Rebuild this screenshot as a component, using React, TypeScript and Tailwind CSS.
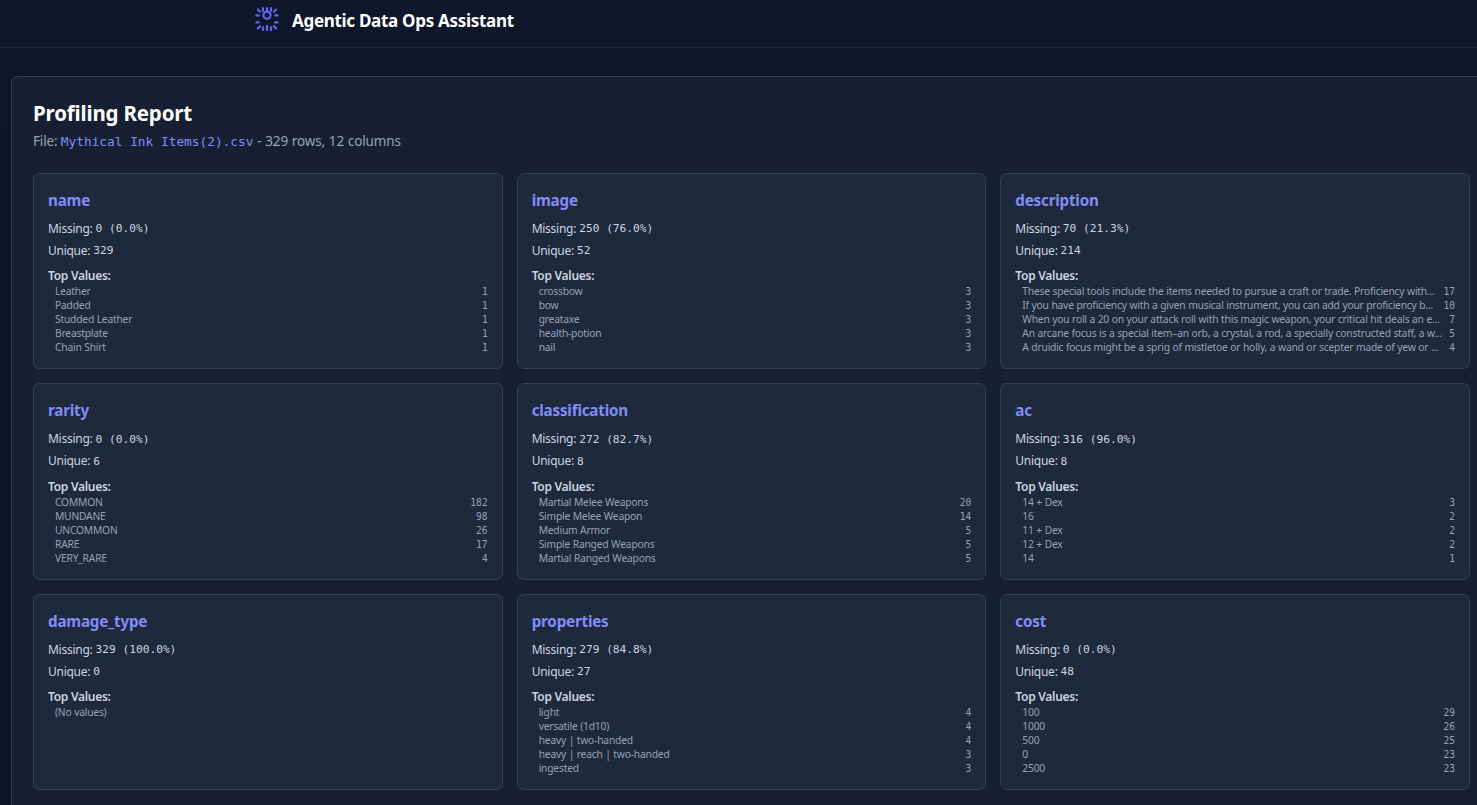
type Row = [string, number];

interface Column {
  name: string;
  missing: string;
  unique: number;
  top: Row[];
}

const columns: Column[] = [
  {
    name: 'name', missing: '0 (0.0%)', unique: 329,
    top: [['Leather', 1], ['Padded', 1], ['Studded Leather', 1], ['Breastplate', 1], ['Chain Shirt', 1]],
  },
  {
    name: 'image', missing: '250 (76.0%)', unique: 52,
    top: [['crossbow', 3], ['bow', 3], ['greataxe', 3], ['health-potion', 3], ['nail', 3]],
  },
  {
    name: 'description', missing: '70 (21.3%)', unique: 214,
    top: [
      ['These special tools include the items needed to pursue a craft or trade. Proficiency with...', 17],
      ['If you have proficiency with a given musical instrument, you can add your proficiency b...', 10],
      ['When you roll a 20 on your attack roll with this magic weapon, your critical hit deals an e...', 7],
      ['An arcane focus is a special item–an orb, a crystal, a rod, a specially constructed staff, a w...', 5],
      ['A druidic focus might be a sprig of mistletoe or holly, a wand or scepter made of yew or ...', 4],
    ],
  },
  {
    name: 'rarity', missing: '0 (0.0%)', unique: 6,
    top: [['COMMON', 182], ['MUNDANE', 98], ['UNCOMMON', 26], ['RARE', 17], ['VERY_RARE', 4]],
  },
  {
    name: 'classification', missing: '272 (82.7%)', unique: 8,
    top: [['Martial Melee Weapons', 20], ['Simple Melee Weapon', 14], ['Medium Armor', 5], ['Simple Ranged Weapons', 5], ['Martial Ranged Weapons', 5]],
  },
  {
    name: 'ac', missing: '316 (96.0%)', unique: 8,
    top: [['14 + Dex', 3], ['16', 2], ['11 + Dex', 2], ['12 + Dex', 2], ['14', 1]],
  },
  { name: 'damage_type', missing: '329 (100.0%)', unique: 0, top: [] },
  {
    name: 'properties', missing: '279 (84.8%)', unique: 27,
    top: [['light', 4], ['versatile (1d10)', 4], ['heavy | two-handed', 4], ['heavy | reach | two-handed', 3], ['ingested', 3]],
  },
  {
    name: 'cost', missing: '0 (0.0%)', unique: 48,
    top: [['100', 29], ['1000', 26], ['500', 25], ['0', 23], ['2500', 23]],
  },
];

function Logo() {
  return (
    <svg className="mb-[3px] size-7 shrink-0" viewBox="0 0 28 28" fill="none" stroke="#6366f1" strokeWidth="2.2" strokeLinecap="round">
      <circle cx="14" cy="10.3" r="3.6" />
      <path d="M10 3v3M14 3v3.6M18 3v3M10 22.3v2.6M14 20.8v4.1M18 22.3v2.6M3.4 10.4h2.4M22.2 10.4h2.4M3.4 17.4h2.4M22.2 17.4h2.4M4.9 4.5l2.2 2.2M23.1 4.5l-2.2 2.2M4.9 23.4l2.2-2.2M23.1 23.4l-2.2-2.2" />
    </svg>
  );
}

function Stat({ label, value }: { label: string; value: string | number }) {
  return (
    <p className="flex h-[17.5px] items-center gap-[3px] whitespace-pre text-[12px] tracking-[-0.26px] text-[#cbd5e1]">
      <span>{label}:</span>
      <span className="pt-[1.4px] font-['DejaVu_Sans_Mono',monospace] text-[11.2px] tracking-[0px]">{value}</span>
    </p>
  );
}

function ColumnCard({ column }: { column: Column }) {
  return (
    <section className="h-[196.4px] min-w-0 rounded-[7px] border border-[#334155] bg-[#1e293b] p-[14px]">
      <h3 className="mb-[7.6px] text-[15.2px] leading-[24.5px] font-bold tracking-[-0.2px] text-[#818cf8]">{column.name}</h3>
      <div className="flex flex-col gap-[4.5px]">
        <Stat label="Missing" value={column.missing} />
        <Stat label="Unique" value={column.unique} />
      </div>
      <h4 className="mt-[7.6px] text-[12px] leading-[17.5px] font-semibold tracking-[-0.28px] text-[#cbd5e1]">Top Values:</h4>
      <ul className="-mt-[0.5px] pl-[7px] text-[10.3px] leading-[14px] tracking-[-0.22px] [word-spacing:0.2px] text-[#94a3b8]">
        {column.top.length === 0 && <li>(No values)</li>}
        {column.top.map(([value, count]) => (
          <li key={value} className="flex h-[14px] justify-between whitespace-nowrap">
            <span>{value}</span>
            <span className="pt-[1px] font-['DejaVu_Sans_Mono',monospace] text-[9.6px] tracking-[0px]">{count}</span>
          </li>
        ))}
      </ul>
    </section>
  );
}

export default function App() {
  return (
    <div className="h-[805px] w-full overflow-hidden bg-[#0f172a] font-['Noto_Sans',sans-serif]">
      <header className="flex h-12 items-start border-b border-[#1e293b] pl-[253px]">
        <div className="flex h-[41px] items-center gap-[11px]">
          <Logo />
          <h1 className="text-[17px] font-bold tracking-[-0.3px] whitespace-nowrap text-white">Agentic Data Ops Assistant</h1>
        </div>
      </header>
      <main className="mt-7 ml-[11px] h-[760px] w-[1481px] rounded-[7px] border border-[#334155] bg-[#162032] p-[21px] shadow-2xl">
        <h2 className="text-[20.5px] leading-[31px] font-bold tracking-[-0.17px] text-white">Profiling Report</h2>
        <p className="flex h-[24px] items-center text-[13.5px] whitespace-pre text-[#94a3b8]">
          <span className="tracking-[-0.15px]">File: </span>
          <span className="pt-[1px] font-['DejaVu_Sans_Mono',monospace] text-[12.8px] text-[#818cf8]">Mythical Ink Items(2).csv</span>
          <span className="tracking-[-0.13px] [word-spacing:0.4px]"> - 329 rows, 12 columns</span>
        </p>
        <div className="mt-[20px] grid w-[1437px] grid-cols-3 gap-[14px]">
          {columns.map((column) => (
            <ColumnCard key={column.name} column={column} />
          ))}
        </div>
      </main>
    </div>
  );
}
